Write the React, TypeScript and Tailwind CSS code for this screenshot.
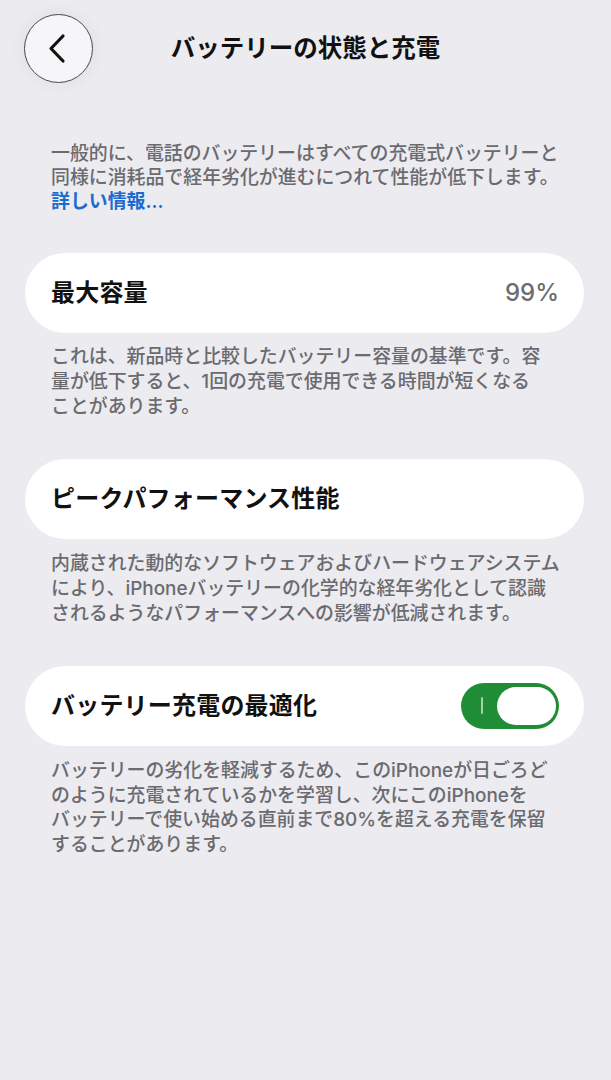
const jp = { fontFamily: '"Inter", "Noto Sans CJK JP", sans-serif' }

const Card = ({ title, children }: { title: string; children?: React.ReactNode }) => (
  <div className="mx-[25px] mr-[27px] flex h-[80px] items-center justify-between rounded-full bg-white pl-[26px] pr-[25px]">
    <span className="text-[24px] font-bold leading-none tracking-[0.2px] text-[#111]">{title}</span>
    {children}
  </div>
)

const Note = ({ children, className = '' }: { children: React.ReactNode; className?: string }) => (
  <p className={`pl-[51px] pr-[30px] text-[18.9px] font-medium leading-[24.8px] text-[#6a6a6f] ${className}`}>{children}</p>
)

const Toggle = () => (
  <div className="flex h-[46px] w-[98px] items-center justify-between rounded-full bg-[#1f8d36] pl-[20px] pr-[3px]">
    <span className="h-[17px] w-[2px] rounded-full bg-white/60" />
    <span className="h-[38px] w-[59px] rounded-full bg-white" />
  </div>
)

export default function App() {
  return (
    <div className="min-h-[1080px] w-full bg-[#ebebf0]" style={jp}>
      {/* Header */}
      <div className="grid grid-cols-[1fr_auto_1fr] items-center pt-[14px]">
        <div className="pl-[24px]">
          <button className="flex h-[69px] w-[69px] items-center justify-center rounded-full border border-[#4a4a4d] bg-[#f6f6f9] shadow-[0_0_18px_rgba(0,0,0,0.06)]">
            <svg width="20" height="31" viewBox="0 0 20 31" className="-ml-[4px]">
              <path d="M16 3 L4 15.5 L16 28" fill="none" stroke="#111" strokeWidth="3.2" strokeLinecap="round" strokeLinejoin="round" />
            </svg>
          </button>
        </div>
        <h1 className="text-[24.5px] font-bold leading-none text-[#111]">バッテリーの状態と充電</h1>
        <div />
      </div>

      <Note className="mt-[59px] leading-[24px]">
        一般的に、電話のバッテリーはすべての充電式バッテリーと
        <br />
        同様に消耗品で経年劣化が進むにつれて性能が低下します。
        <br />
        <span className="font-semibold text-[#1d6bcf]">詳しい情報...</span>
      </Note>

      <div className="mt-[39px]">
        <Card title="最大容量">
          <span className="text-[24px] font-medium text-[#6c6c70]">99%</span>
        </Card>
      </div>
      <Note className="mt-[12px]">
        これは、新品時と比較したバッテリー容量の基準です。容
        <br />
        量が低下すると、1回の充電で使用できる時間が短くなる
        <br />
        ことがあります。
      </Note>

      <div className="mt-[40px]">
        <Card title="ピークパフォーマンス性能" />
      </div>
      <Note className="mt-[13px]">
        内蔵された動的なソフトウェアおよびハードウェアシステム
        <br />
        により、iPhoneバッテリーの化学的な経年劣化として認識
        <br />
        されるようなパフォーマンスへの影響が低減されます。
      </Note>

      <div className="mt-[39px]">
        <Card title="バッテリー充電の最適化">
          <Toggle />
        </Card>
      </div>
      <Note className="mt-[13px]">
        バッテリーの劣化を軽減するため、このiPhoneが日ごろど
        <br />
        のように充電されているかを学習し、次にこのiPhoneを
        <br />
        バッテリーで使い始める直前まで80%を超える充電を保留
        <br />
        することがあります。
      </Note>
    </div>
  )
}
